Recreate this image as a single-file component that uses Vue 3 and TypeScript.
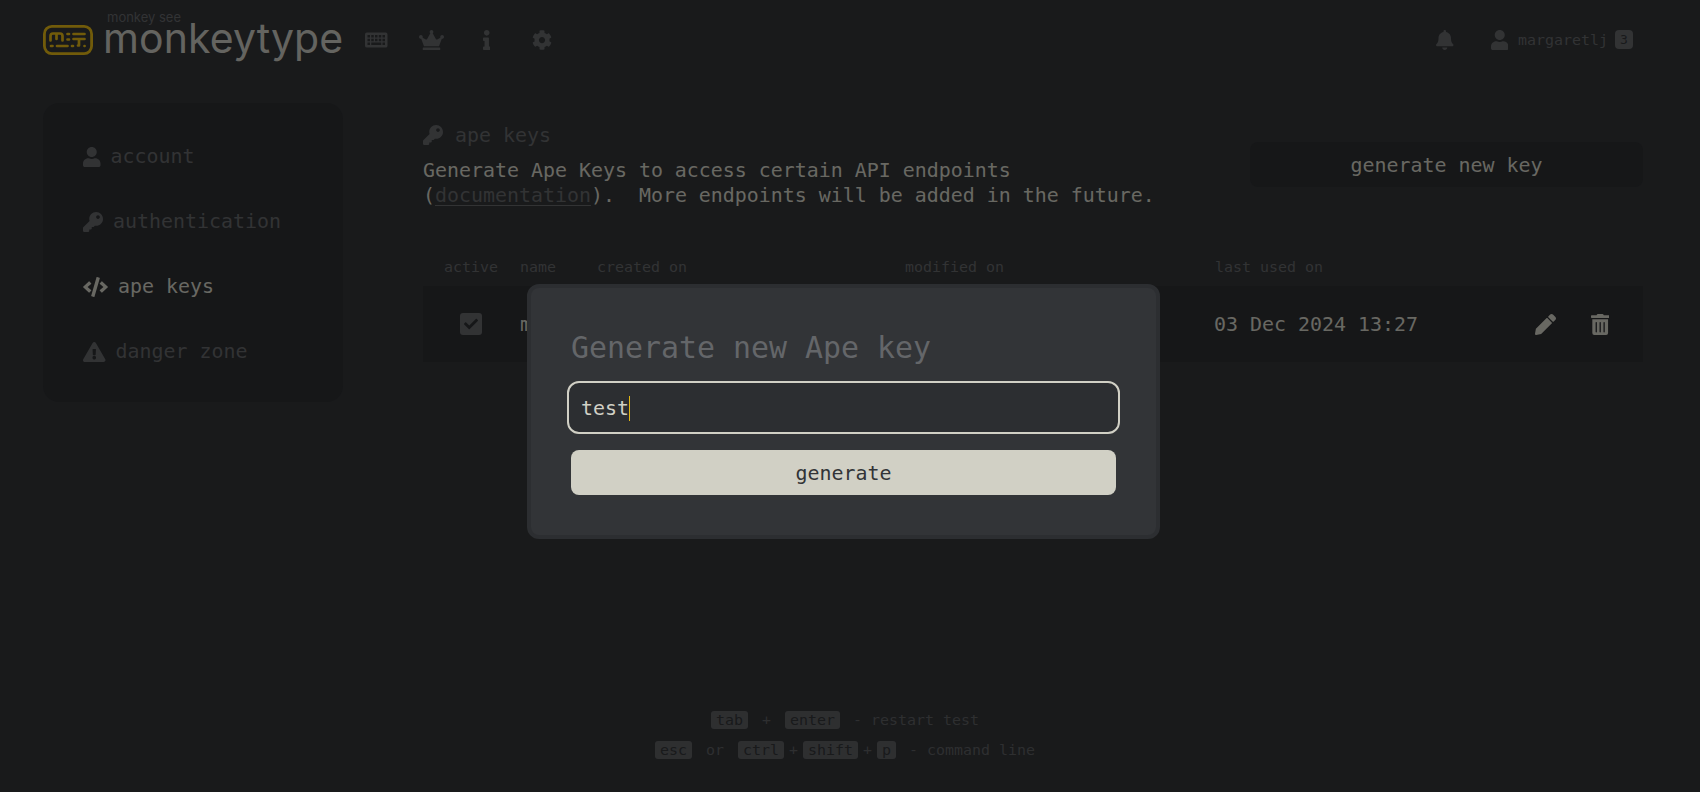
<script setup lang="ts">
interface NavItem { label: string; icon: string; vb: string; active?: boolean }

const P = {
  user: 'M224 256c70.7 0 128-57.3 128-128S294.7 0 224 0 96 57.3 96 128s57.3 128 128 128zm89.6 32h-16.7c-22.2 10.2-46.9 16-72.9 16s-50.6-5.8-72.9-16h-16.7C60.2 288 0 348.2 0 422.4V464c0 26.5 21.5 48 48 48h352c26.5 0 48-21.5 48-48v-41.6c0-74.2-60.2-134.4-134.4-134.4z',
  key: 'M512 176.001C512 273.203 433.202 352 336 352c-11.22 0-22.19-1.062-32.827-3.069l-24.012 27.014A23.999 23.999 0 0 1 261.223 384H224v40c0 13.255-10.745 24-24 24h-40v40c0 13.255-10.745 24-24 24H24c-13.255 0-24-10.745-24-24v-78.059c0-6.365 2.529-12.47 7.029-16.971l161.802-161.802C163.108 213.814 160 195.271 160 176 160 78.798 238.797.001 335.999 0 433.488-.001 512 78.511 512 176.001zM336 128c0 26.51 21.49 48 48 48s48-21.49 48-48-21.49-48-48-48-48 21.49-48 48z',
  code: 'M278.9 511.5l-61-17.7c-6.4-1.8-10-8.5-8.2-14.9L346.2 8.7c1.8-6.4 8.5-10 14.9-8.2l61 17.7c6.4 1.8 10 8.5 8.2 14.9L293.8 503.3c-1.9 6.4-8.5 10.1-14.9 8.2zm-114-112.2l43.5-46.4c4.6-4.9 4.3-12.7-.8-17.2L117 256l90.6-79.7c5.1-4.5 5.5-12.3.8-17.2l-43.5-46.4c-4.5-4.8-12.1-5.1-17-.5L3.8 247.2c-5.1 4.7-5.1 12.8 0 17.5l144.1 135.1c4.9 4.6 12.5 4.4 17-.5zm327.2.6l144.1-135.1c5.1-4.7 5.1-12.8 0-17.5L492.1 112.1c-4.8-4.5-12.4-4.3-17 .5L431.6 159c-4.6 4.9-4.3 12.7.8 17.2L523 256l-90.6 79.7c-5.1 4.5-5.5 12.3-.8 17.2l43.5 46.4c4.5 4.9 12.1 5.1 17 .6z',
  warn: 'M569.517 440.013C587.975 472.007 564.806 512 527.94 512H48.054c-36.937 0-59.999-40.055-41.577-71.987L246.423 23.985c18.467-32.009 64.72-31.951 83.154 0l239.94 416.028zM288 354c-25.405 0-46 20.595-46 46s20.595 46 46 46 46-20.595 46-46-20.595-46-46-46zm-43.673-165.346l7.418 136c.347 6.364 5.609 11.346 11.982 11.346h48.546c6.373 0 11.635-4.982 11.982-11.346l7.418-136c.375-6.874-5.098-12.654-11.982-12.654h-63.383c-6.884 0-12.356 5.78-11.981 12.654z',
  crown: 'M528 448H112c-8.8 0-16 7.2-16 16v32c0 8.8 7.2 16 16 16h416c8.8 0 16-7.2 16-16v-32c0-8.8-7.2-16-16-16zm64-320c-26.5 0-48 21.5-48 48 0 7.1 1.6 13.7 4.4 19.8L476 239.2c-15.4 9.2-35.3 4-44.2-11.6L350.3 85C361 76.2 368 63 368 48c0-26.5-21.5-48-48-48s-48 21.5-48 48c0 15 7 28.2 17.7 37l-81.5 142.6c-8.9 15.6-28.9 20.8-44.2 11.6l-72.3-43.4c2.7-6 4.4-12.7 4.4-19.8 0-26.5-21.5-48-48-48S0 149.5 0 176s21.5 48 48 48c2.6 0 5.2-.4 7.7-.8L128 416h384l72.3-192.8c2.5.4 5.1.8 7.7.8 26.5 0 48-21.5 48-48s-21.5-48-48-48z',
  info: 'M20 424.229h20V279.771H20c-11.046 0-20-8.954-20-20V212c0-11.046 8.954-20 20-20h112c11.046 0 20 8.954 20 20v212.229h20c11.046 0 20 8.954 20 20V492c0 11.046-8.954 20-20 20H20c-11.046 0-20-8.954-20-20v-47.771c0-11.046 8.954-20 20-20zM96 0C56.235 0 24 32.235 24 72s32.235 72 72 72 72-32.235 72-72S135.764 0 96 0z',
  cog: 'M487.4 315.7l-42.6-24.6c4.3-23.2 4.3-47 0-70.2l42.6-24.6c4.9-2.8 7.1-8.6 5.5-14-11.1-35.6-30-67.8-54.7-94.6-3.8-4.1-10-5.1-14.8-2.3L380.8 110c-17.9-15.4-38.5-27.3-60.8-35.1V25.8c0-5.6-3.9-10.5-9.4-11.7-36.7-8.2-74.3-7.8-109.2 0-5.5 1.2-9.4 6.1-9.4 11.7V75c-22.2 7.9-42.8 19.8-60.8 35.1L88.7 85.5c-4.9-2.8-11-1.9-14.8 2.3-24.7 26.7-43.6 58.9-54.7 94.6-1.7 5.4.6 11.2 5.5 14L67.3 221c-4.3 23.2-4.3 47 0 70.2l-42.6 24.6c-4.9 2.8-7.1 8.6-5.5 14 11.1 35.6 30 67.8 54.7 94.6 3.8 4.1 10 5.1 14.8 2.3l42.6-24.6c17.9 15.4 38.5 27.3 60.8 35.1v49.2c0 5.6 3.9 10.5 9.4 11.7 36.7 8.2 74.3 7.8 109.2 0 5.5-1.2 9.4-6.1 9.4-11.7v-49.2c22.2-7.9 42.8-19.8 60.8-35.1l42.6 24.6c4.9 2.8 11 1.9 14.8-2.3 24.7-26.7 43.6-58.9 54.7-94.6 1.5-5.5-.7-11.3-5.6-14.1zM256 336c-44.1 0-80-35.9-80-80s35.9-80 80-80 80 35.9 80 80-35.9 80-80 80z',
  bell: 'M224 512c35.32 0 63.97-28.65 63.97-64H160.03c0 35.35 28.65 64 63.97 64zm215.39-149.71c-19.32-20.76-55.47-51.99-55.47-154.29 0-77.7-54.48-139.9-127.94-155.16V32c0-17.67-14.32-32-31.98-32s-31.98 14.33-31.98 32v20.84C118.56 68.1 64.08 130.3 64.08 208c0 102.3-36.15 133.53-55.47 154.29-6 6.45-8.66 14.16-8.61 21.71.11 16.4 12.98 32 32.1 32h383.8c19.12 0 32-15.6 32.1-32 .05-7.55-2.61-15.27-8.61-21.71z',
  pen: 'M497.9 142.1l-46.1 46.1c-4.7 4.7-12.3 4.7-17 0l-111-111c-4.7-4.7-4.7-12.3 0-17l46.1-46.1c18.7-18.7 49.1-18.7 67.9 0l60.1 60.1c18.8 18.7 18.8 49.1 0 67.9zM284.2 99.8L21.6 362.4.4 483.9c-2.9 16.4 11.4 30.6 27.8 27.8l121.5-21.3 262.6-262.6c4.7-4.7 4.7-12.3 0-17l-111-111c-4.8-4.7-12.4-4.7-17.1 0z',
  trash: 'M32 464a48 48 0 0 0 48 48h288a48 48 0 0 0 48-48V128H32zm272-256a16 16 0 0 1 32 0v224a16 16 0 0 1-32 0zm-96 0a16 16 0 0 1 32 0v224a16 16 0 0 1-32 0zm-96 0a16 16 0 0 1 32 0v224a16 16 0 0 1-32 0zM432 32H312l-9.4-18.7A24 24 0 0 0 281.1 0H166.8a23.72 23.72 0 0 0-21.4 13.3L136 32H16A16 16 0 0 0 0 48v32a16 16 0 0 0 16 16h416a16 16 0 0 0 16-16V48a16 16 0 0 0-16-16z',
  check: 'M173.898 439.404l-166.4-166.4c-9.997-9.997-9.997-26.206 0-36.204l36.203-36.204c9.997-9.998 26.207-9.998 36.204 0L192 312.69 432.095 72.596c9.997-9.997 26.207-9.997 36.204 0l36.203 36.204c9.997 9.997 9.997 26.206 0 36.204l-294.4 294.401c-9.998 9.997-26.207 9.997-36.204-.001z',
}

const keyboardPath =
  'M48 64h480a48 48 0 0 1 48 48v288a48 48 0 0 1-48 48H48a48 48 0 0 1-48-48V112a48 48 0 0 1 48-48z' +
  [64, 160, 256, 352, 448].map((x) => `M${x} 128h64v64h-64zM${x} 224h64v64h-64z`).join('') +
  'M64 320h64v64H64zM160 320h256v64H160zM448 320h64v64h-64z'

const sideItems: NavItem[] = [
  { label: 'account', icon: P.user, vb: '0 0 448 512' },
  { label: 'authentication', icon: P.key, vb: '0 0 512 512' },
  { label: 'ape keys', icon: P.code, vb: '0 0 640 512', active: true },
  { label: 'danger zone', icon: P.warn, vb: '0 0 576 512' },
]

const topNav = [
  { icon: keyboardPath, vb: '0 0 576 512' },
  { icon: P.crown, vb: '0 0 640 512' },
  { icon: P.info, vb: '0 0 192 512' },
  { icon: P.cog, vb: '0 0 512 512' },
]

const footerLinks = ['contact', 'support', 'github', 'discord', 'twitter', 'terms', 'security', 'privacy']
</script>

<template>
  <div class="page">
    <div class="container">
      <header class="top">
        <div class="logo">
          <svg class="logo-icon" viewBox="0 0 50 30" fill="none" stroke="#e2b714" stroke-linecap="round" stroke-linejoin="round">
            <rect x="1.4" y="1.4" width="47.2" height="27.2" rx="7.5" stroke-width="2.8" />
            <g stroke-width="2.7">
              <path d="M7.5 15.5V11a2.5 2.5 0 0 1 2.5-2.5h7a2.5 2.5 0 0 1 2.5 2.5v4.5M13.5 9v5" />
              <path d="M24.5 9h1.5M24.5 14.5h1.5M30.5 9h11M30.5 14h11M36 14v6.5h-1" />
              <path d="M8 21h1.5M14 21h10.5M29 21h1M41.5 21h.1" />
            </g>
          </svg>
          <div class="wordmark">
            <span class="see">monkey see</span>
            <span class="name">monkeytype</span>
          </div>
        </div>
        <nav class="nav">
          <span v-for="(n, i) in topNav" :key="i" class="nav-cell">
            <svg class="ico" :viewBox="n.vb" fill-rule="evenodd"><path :d="n.icon" /></svg>
          </span>
        </nav>
        <div class="account">
          <svg class="ico bell" viewBox="0 0 448 512"><path :d="P.bell" /></svg>
          <svg class="ico" viewBox="0 0 448 512"><path :d="P.user" /></svg>
          <span class="username">margaretlj</span>
          <span class="level">3</span>
        </div>
      </header>

      <main class="content">
        <aside class="side">
          <div v-for="s in sideItems" :key="s.label" class="side-item" :class="{ active: s.active }">
            <svg class="ico" :viewBox="s.vb"><path :d="s.icon" /></svg>
            <span>{{ s.label }}</span>
          </div>
        </aside>

        <section class="panel">
          <div class="panel-head">
            <div>
              <div class="panel-title">
                <svg class="ico" viewBox="0 0 512 512"><path :d="P.key" /></svg>
                <span>ape keys</span>
              </div>
              <p class="desc">Generate Ape Keys to access certain API endpoints<br />(<a class="doc">documentation</a>).&nbsp; More endpoints will be added in the future.</p>
            </div>
            <button class="new-key">generate new key</button>
          </div>

          <div class="table-head cols">
            <span>active</span><span>name</span><span>created on</span><span>modified on</span><span>last used on</span>
          </div>
          <div class="table-row cols">
            <span class="checkbox"><svg viewBox="0 0 512 512"><path :d="P.check" /></svg></span>
            <span>my key</span>
            <span>03 Dec 2024 13:20</span>
            <span>03 Dec 2024 13:20</span>
            <span class="last-used">03 Dec 2024 13:27</span>
            <span class="actions">
              <svg class="act" viewBox="0 0 512 512"><path :d="P.pen" /></svg>
              <svg class="act" viewBox="0 0 448 512"><path :d="P.trash" /></svg>
            </span>
          </div>
        </section>
      </main>

      <div class="tips">
        <div class="tip-line">
          <kbd>tab</kbd><span class="sep">+</span><kbd>enter</kbd><span class="desc-tip">- restart test</span>
        </div>
        <div class="tip-line">
          <kbd>esc</kbd><span class="sep">or</span><kbd>ctrl</kbd><span class="plus">+</span><kbd>shift</kbd><span class="plus">+</span><kbd>p</kbd><span class="desc-tip">- command line</span>
        </div>
      </div>

      <footer class="links">
        <span v-for="l in footerLinks" :key="l">{{ l }}</span>
      </footer>
    </div>

    <div class="overlay">
      <div class="modal">
        <div class="modal-title">Generate new Ape key</div>
        <div class="field">test<span class="caret"></span></div>
        <button class="generate">generate</button>
      </div>
    </div>
  </div>
</template>

<style>
html, body { margin: 0; background: #323437; overflow: hidden; }
</style>

<style scoped>
.page {
  position: relative;
  height: 792px;
  overflow: hidden;
  background: #323437;
  color: #646669;
  font-family: "DejaVu Sans Mono", "Liberation Mono", monospace;
  font-size: 19.93px;
}
.container { width: 1600px; margin-left: 43px; }
.ico { height: 20px; fill: currentColor; flex: none; display: block; }

.top { display: flex; align-items: center; height: 79px; }
.logo { display: flex; align-items: center; gap: 10px; width: 306px; }
.logo-icon { width: 50px; height: 30px; flex: none; }
.wordmark { position: relative; font-family: "Inter", sans-serif; line-height: 1; margin-top: -3px; }
.name { display: block; font-size: 41px; color: #c9c8c0; letter-spacing: 0.1px; white-space: nowrap; }
.see { position: absolute; left: 4px; top: -7px; font-size: 13px; color: #646669; white-space: nowrap; }
.nav { display: flex; }
.nav-cell { width: 55px; display: flex; justify-content: center; }
.account { margin-left: auto; display: flex; align-items: center; margin-right: 10px; }
.bell { margin-right: 37px; }
.username { font-size: 14.95px; margin-left: 10px; }
.level {
  margin-left: 7px; width: 18px; height: 19px; border-radius: 4px;
  background: #646669; color: #323437;
  display: flex; align-items: center; justify-content: center; font-size: 13px;
}

.content { display: grid; grid-template-columns: 300px 1fr; gap: 80px; margin-top: 24px; }
.side {
  background: #2c2e31; border-radius: 16px; height: 299px; box-sizing: border-box;
  padding: 21px 40px 0; display: flex; flex-direction: column;
}
.side-item { display: flex; align-items: center; gap: 10px; height: 65px; }
.side-item.active { color: #d1d0c5; }

.panel { min-width: 0; }
.panel-head { display: flex; justify-content: space-between; align-items: flex-start; height: 151px; }
.panel-title { display: flex; align-items: center; gap: 12px; height: 20px; margin-top: 22px; }
.desc { margin: 13px 0 0; color: #d1d0c5; line-height: 25px; }
.doc { color: #646669; text-decoration: underline; text-underline-offset: 3px; }
.new-key, .generate {
  border: none; border-radius: 8px; font: inherit; height: 45px; padding: 2px 0 0;
  display: block; text-align: center;
}
.new-key { width: 393px; margin-top: 39px; background: #2c2e31; color: #d1d0c5; }

.cols {
  display: grid;
  grid-template-columns: 76px 77px 308px 310px 1fr 130px;
  padding-left: 21px;
  align-items: center;
}
.table-head { font-size: 14.95px; height: 26px; margin-bottom: 6px; }
.table-row { background: #2c2e31; height: 76px; color: #d1d0c5; }
.table-row span { white-space: nowrap; }
.last-used { margin-left: -1px; }
.checkbox {
  width: 22px; height: 22px; margin-left: 16px; border-radius: 3px; background: #646669;
  display: flex; align-items: center; justify-content: center;
}
.checkbox svg { width: 14px; height: 14px; fill: #2c2e31; }
.actions { display: flex; justify-content: flex-end; gap: 35px; padding-right: 34px; }
.act { height: 21px; fill: #d1d0c5; display: block; }

.tips { margin-top: 303px; font-size: 14.95px; opacity: 0.85; }
.tip-line { display: flex; justify-content: center; align-items: center; height: 30px; padding-left: 4px; }
kbd {
  font: inherit; background: #646669; color: #323437; height: 18px; line-height: 18px;
  padding: 0 5px; border-radius: 3px;
}
.sep { margin: 0 14px; }
.plus { margin: 0 5px; }
.desc-tip { margin-left: 13px; }

.links { display: flex; gap: 60px; margin-top: 25px; padding-left: 60px; font-size: 14.95px; }

.overlay {
  position: absolute; inset: 0; width: 1687px; background: transparent;
  box-shadow: 0 0 0 100px rgba(0, 0, 0, 0.5), inset 0 0 0 2000px rgba(0, 0, 0, 0.5);
  display: flex; justify-content: center; align-items: flex-start; padding-top: 284px; box-sizing: border-box;
}
.modal {
  width: 633px; height: 255px; box-sizing: border-box;
  background: #323437; border: 4px solid #2c2e31; border-radius: 12px; padding: 40px;
  display: flex; flex-direction: column;
}
.modal-title { font-size: 29.9px; line-height: 40px; margin-bottom: 13px; color: #646669; }
.field {
  margin: 0 -4px 16px; height: 53px; box-sizing: border-box; border: 2px solid #d1d0c5; border-radius: 12px;
  background: #2c2e31; color: #d1d0c5; padding: 2px 12px 0; display: flex; align-items: center;
}
.caret { width: 1px; height: 25px; background: #e2b714; }
.generate { background: #d1d0c5; color: #323437; width: 100%; }
</style>
